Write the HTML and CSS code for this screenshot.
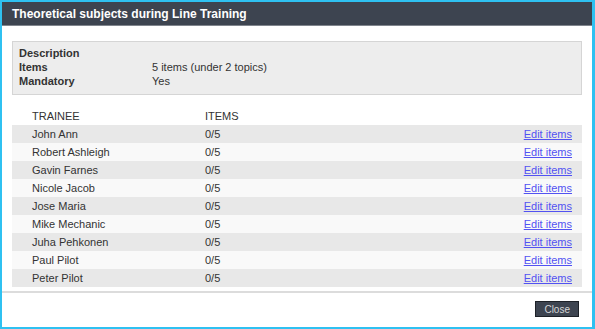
FILE: index.html
```html
<!DOCTYPE html>
<html>
	<head>
		<meta charset="UTF-8">
		<title>Theoretical subjects during Line Training</title>
		<link rel="stylesheet" href="styles.css">
	</head>
	<body>
		<!-- dialog with blue selection frame round it -->
		<div class="dialog">
			<div class="dialog-title">Theoretical subjects during Line Training</div>

			<div class="dialog-body">
				<div class="info">
					<div class="info-label">Description</div>
					<div class="info-value"></div>
					<div class="info-label">Items</div>
					<div class="info-value">5 items (under 2 topics)</div>
					<div class="info-label">Mandatory</div>
					<div class="info-value">Yes</div>
				</div>

				<table class="trainees">
					<thead>
						<tr>
							<th class="col-name">TRAINEE</th>
							<th class="col-items">ITEMS</th>
							<th class="col-edit"></th>
						</tr>
					</thead>
					<tbody>
						<tr><td class="col-name">John Ann</td><td>0/5</td><td class="col-edit"><a href="#">Edit items</a></td></tr>
						<tr><td class="col-name">Robert Ashleigh</td><td>0/5</td><td class="col-edit"><a href="#">Edit items</a></td></tr>
						<tr><td class="col-name">Gavin Farnes</td><td>0/5</td><td class="col-edit"><a href="#">Edit items</a></td></tr>
						<tr><td class="col-name">Nicole Jacob</td><td>0/5</td><td class="col-edit"><a href="#">Edit items</a></td></tr>
						<tr><td class="col-name">Jose Maria</td><td>0/5</td><td class="col-edit"><a href="#">Edit items</a></td></tr>
						<tr><td class="col-name">Mike Mechanic</td><td>0/5</td><td class="col-edit"><a href="#">Edit items</a></td></tr>
						<tr><td class="col-name">Juha Pehkonen</td><td>0/5</td><td class="col-edit"><a href="#">Edit items</a></td></tr>
						<tr><td class="col-name">Paul Pilot</td><td>0/5</td><td class="col-edit"><a href="#">Edit items</a></td></tr>
						<tr><td class="col-name">Peter Pilot</td><td>0/5</td><td class="col-edit"><a href="#">Edit items</a></td></tr>
					</tbody>
				</table>
			</div>

			<div class="dialog-footer">
				<button class="close-btn">Close</button>
			</div>
		</div>
	</body>
</html>
```

FILE: styles.css
```css
html, body {
	height: 100%;
}
body {
	margin: 0;
	padding: 2px 3px 2px 2px;
	box-sizing: border-box;
	background-color: #2fc1f1;
	font-family: "Liberation Sans", Arial, sans-serif;
	font-size: 11px;
	color: #333;
}
.dialog {
	display: flex;
	flex-direction: column;
	height: 100%;
	background-color: white;
}
.dialog-title {
	height: 22px;
	padding: 1px 0 0 10px;
	line-height: 22px;
	background-color: #3d4450;
	border-bottom: 1px solid #80858d;
	color: white;
	font-size: 12px;
	font-weight: bold;
}
.dialog-body {
	padding: 15px 10px 4px;
}
.info {
	display: grid;
	grid-template-columns: 133px 1fr;
	line-height: 14px;
	padding: 4px 6px 6px;
	background-color: #ededed;
	border: 1px solid #d5d5d5;
}
.info-label {
	font-weight: bold;
}
.trainees {
	width: 100%;
	margin-top: 12px;
	border-collapse: collapse;
	table-layout: fixed;
}
	.trainees th,
	.trainees td {
		height: 18px;
		padding: 0;
		line-height: 16px;
		text-align: left;
		font-weight: normal;
		white-space: nowrap;
	}
	.trainees tbody tr:nth-child(odd) {
		background-color: #e8e8e8;
	}
	.trainees tbody tr:nth-child(even) {
		background-color: #f9f9f9;
	}
	.trainees .col-name {
		width: 173px;
		padding-left: 20px;
	}
	.trainees .col-edit {
		width: 120px;
		padding-right: 10px;
		text-align: right;
	}
a {
	color: #5252f2;
	text-decoration: underline;
}
.dialog-footer {
	display: flex;
	justify-content: flex-end;
	padding: 8px 13px 0;
	border-top: 2px solid #dcdcdc;
	flex: 1;
}
.close-btn {
	height: 16px;
	padding: 0 8px;
	box-sizing: border-box;
	background-color: #3d4450;
	border: 1px solid #1d2127;
	color: #d6d6d6;
	font-family: "Liberation Sans", Arial, sans-serif;
	font-size: 10px;
	line-height: 13px;
}
```
